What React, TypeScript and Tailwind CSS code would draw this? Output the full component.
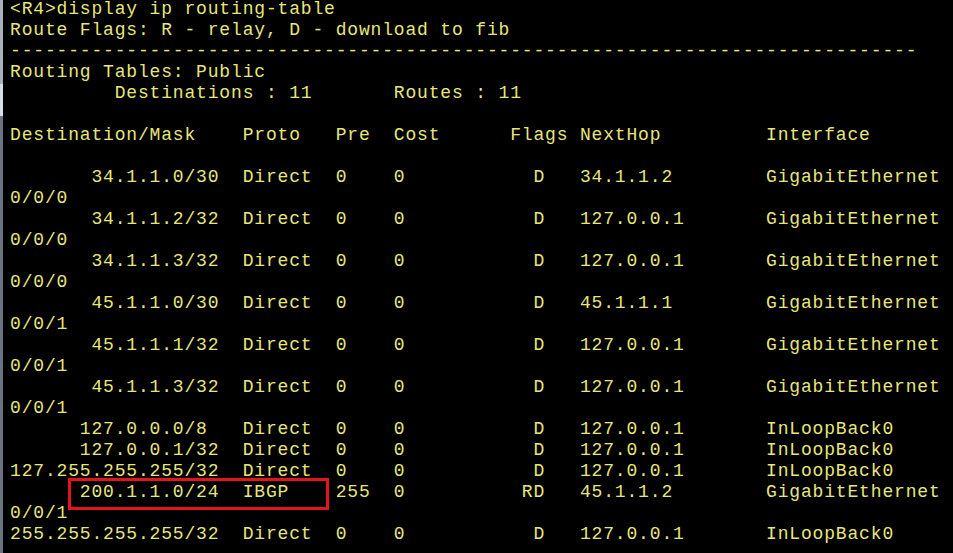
const pad = (s: string, n: number) => s.padEnd(n, " ");

type Route = {
	dest: string;
	col: number;
	proto: string;
	pre: string;
	flags: string;
	hop: string;
	iface: string;
	port?: string;
};

const routes: Route[] = [
	{ dest: "34.1.1.0/30", col: 7, proto: "Direct", pre: "0", flags: "D", hop: "34.1.1.2", iface: "GigabitEthernet", port: "0/0/0" },
	{ dest: "34.1.1.2/32", col: 7, proto: "Direct", pre: "0", flags: "D", hop: "127.0.0.1", iface: "GigabitEthernet", port: "0/0/0" },
	{ dest: "34.1.1.3/32", col: 7, proto: "Direct", pre: "0", flags: "D", hop: "127.0.0.1", iface: "GigabitEthernet", port: "0/0/0" },
	{ dest: "45.1.1.0/30", col: 7, proto: "Direct", pre: "0", flags: "D", hop: "45.1.1.1", iface: "GigabitEthernet", port: "0/0/1" },
	{ dest: "45.1.1.1/32", col: 7, proto: "Direct", pre: "0", flags: "D", hop: "127.0.0.1", iface: "GigabitEthernet", port: "0/0/1" },
	{ dest: "45.1.1.3/32", col: 7, proto: "Direct", pre: "0", flags: "D", hop: "127.0.0.1", iface: "GigabitEthernet", port: "0/0/1" },
	{ dest: "127.0.0.0/8", col: 6, proto: "Direct", pre: "0", flags: "D", hop: "127.0.0.1", iface: "InLoopBack0" },
	{ dest: "127.0.0.1/32", col: 6, proto: "Direct", pre: "0", flags: "D", hop: "127.0.0.1", iface: "InLoopBack0" },
	{ dest: "127.255.255.255/32", col: 0, proto: "Direct", pre: "0", flags: "D", hop: "127.0.0.1", iface: "InLoopBack0" },
	{ dest: "200.1.1.0/24", col: 6, proto: "IBGP", pre: "255", flags: "RD", hop: "45.1.1.2", iface: "GigabitEthernet", port: "0/0/1" },
	{ dest: "255.255.255.255/32", col: 0, proto: "Direct", pre: "0", flags: "D", hop: "127.0.0.1", iface: "InLoopBack0" },
];

function routeLine(r: Route) {
	const flagCol = r.flags.length === 2 ? 44 : 45;
	let s = pad(" ".repeat(r.col) + r.dest, 20);
	s = pad(s + r.proto, 28);
	s = pad(s + r.pre, 33);
	s = pad(s + "0", flagCol);
	s = pad(s + r.flags, 49);
	s = pad(s + r.hop, 65);
	return s + r.iface;
}

const lines: string[] = [
	"<R4>display ip routing-table",
	"Route Flags: R - relay, D - download to fib",
	"-".repeat(78),
	"Routing Tables: Public",
	"         Destinations : 11       Routes : 11",
	"",
	"Destination/Mask    Proto   Pre  Cost      Flags NextHop         Interface",
	"",
	...routes.flatMap((r) => (r.port ? [routeLine(r), r.port] : [routeLine(r)])),
];

export default function App() {
	return (
		<div className="flex w-[953px] h-[553px] overflow-hidden bg-black">
			<div className="flex flex-col w-[3px] shrink-0">
				<div className="h-[84px] bg-[#a9b0bb]" />
				<div className="h-[32px] bg-[#d9dde4]" />
				<div className="flex-1 bg-[#6b7382]" />
			</div>

			<div className="relative flex-1 pl-[7px] -mt-[1px]">
				<pre
					className="m-0 whitespace-pre text-[18px] leading-[21px] tracking-[0.83px] text-[#e6e67c]"
					style={{ fontFamily: '"Liberation Mono", "Courier New", monospace' }}
				>
					{lines.map((l, idx) => (
						<div key={idx} className="h-[21px]">
							{l}
						</div>
					))}
				</pre>

				<div className="absolute left-[65px] top-[479px] w-[261px] h-[32px] border-[3px] border-[#e3141c]" />
			</div>
		</div>
	);
}
